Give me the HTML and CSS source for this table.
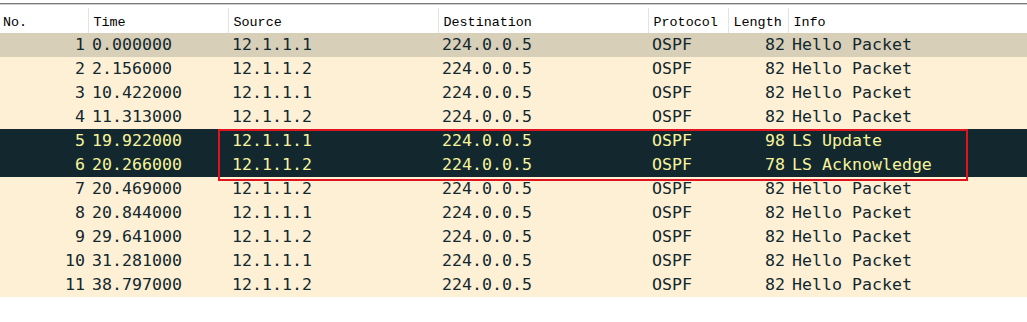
FILE: index.html
```html
<!DOCTYPE html>
<html lang="en">
<head>
    <meta charset="UTF-8">
    <title>Packet list</title>
    <link rel="stylesheet" href="styles.css">
</head>
<body>
    <div class="toolbar-edge"></div>
    <div class="packet-list">
        <table class="packets">
            <colgroup>
                <col class="c-no">
                <col class="c-time">
                <col class="c-src">
                <col class="c-dst">
                <col class="c-proto">
                <col class="c-len">
                <col>
            </colgroup>
            <thead>
                <tr>
                    <th>No.</th>
                    <th>Time</th>
                    <th>Source</th>
                    <th>Destination</th>
                    <th>Protocol</th>
                    <th>Length</th>
                    <th>Info</th>
                </tr>
            </thead>
            <tbody>
                <tr class="current"><td class="num">1</td><td>0.000000</td><td>12.1.1.1</td><td>224.0.0.5</td><td>OSPF</td><td class="num">82</td><td>Hello Packet</td></tr>
                <tr><td class="num">2</td><td>2.156000</td><td>12.1.1.2</td><td>224.0.0.5</td><td>OSPF</td><td class="num">82</td><td>Hello Packet</td></tr>
                <tr><td class="num">3</td><td>10.422000</td><td>12.1.1.1</td><td>224.0.0.5</td><td>OSPF</td><td class="num">82</td><td>Hello Packet</td></tr>
                <tr><td class="num">4</td><td>11.313000</td><td>12.1.1.2</td><td>224.0.0.5</td><td>OSPF</td><td class="num">82</td><td>Hello Packet</td></tr>
                <tr class="marked"><td class="num">5</td><td>19.922000</td><td>12.1.1.1</td><td>224.0.0.5</td><td>OSPF</td><td class="num">98</td><td>LS Update</td></tr>
                <tr class="marked"><td class="num">6</td><td>20.266000</td><td>12.1.1.2</td><td>224.0.0.5</td><td>OSPF</td><td class="num">78</td><td>LS Acknowledge</td></tr>
                <tr><td class="num">7</td><td>20.469000</td><td>12.1.1.2</td><td>224.0.0.5</td><td>OSPF</td><td class="num">82</td><td>Hello Packet</td></tr>
                <tr><td class="num">8</td><td>20.844000</td><td>12.1.1.1</td><td>224.0.0.5</td><td>OSPF</td><td class="num">82</td><td>Hello Packet</td></tr>
                <tr><td class="num">9</td><td>29.641000</td><td>12.1.1.2</td><td>224.0.0.5</td><td>OSPF</td><td class="num">82</td><td>Hello Packet</td></tr>
                <tr><td class="num">10</td><td>31.281000</td><td>12.1.1.1</td><td>224.0.0.5</td><td>OSPF</td><td class="num">82</td><td>Hello Packet</td></tr>
                <tr><td class="num">11</td><td>38.797000</td><td>12.1.1.2</td><td>224.0.0.5</td><td>OSPF</td><td class="num">82</td><td>Hello Packet</td></tr>
            </tbody>
        </table>
        <div class="highlight-box"></div>
    </div>
</body>
</html>
```

FILE: styles.css
```css
:root {
    --row-bg: #fdf0d5;
    --current-bg: #d7cfb8;
    --marked-bg: #12272e;
    --marked-text: #f7f49b;
    --text-color: #12272e;
    --box-color: #e0141e;
}

body {
    margin: 0;
    background: #ffffff;
    font-family: "DejaVu Sans Mono", monospace;
}

.toolbar-edge {
    height: 3px;
    border-bottom: 1px solid #7a7a7a;
    box-shadow: 0 1px 0 #d0d0d0;
}

.packet-list {
    position: relative;
    padding-top: 4px;
}

.packets {
    width: 100%;
    border-collapse: collapse;
    table-layout: fixed;
}

.c-no { width: 88px; }
.c-time { width: 140px; }
.c-src { width: 210px; }
.c-dst { width: 210px; }
.c-proto { width: 80px; }
.c-len { width: 60px; }

.packets th {
    height: 21px;
    padding: 4px 0 0 5px;
    text-align: left;
    font-family: "Liberation Mono", monospace;
    font-size: 13.4px;
    font-weight: normal;
    color: #000000;
    border-left: 1px solid #e3e3e3;
    white-space: nowrap;
    overflow: hidden;
}

.packets th:first-child {
    border-left: none;
    padding-left: 3px;
}

.packets td {
    height: 24px;
    padding: 0 0 0 4px;
    font-size: 16.6px;
    line-height: 24px;
    color: var(--text-color);
    background: var(--row-bg);
    white-space: nowrap;
    overflow: hidden;
}

.packets td.num {
    text-align: right;
    padding: 0 3px 0 0;
}

.packets tr.current td {
    background: var(--current-bg);
}

.packets tr.marked td {
    background: var(--marked-bg);
    color: var(--marked-text);
}

.highlight-box {
    position: absolute;
    left: 218px;
    top: 125px;
    width: 746px;
    height: 48px;
    border: 2px solid var(--box-color);
    pointer-events: none;
}
```
